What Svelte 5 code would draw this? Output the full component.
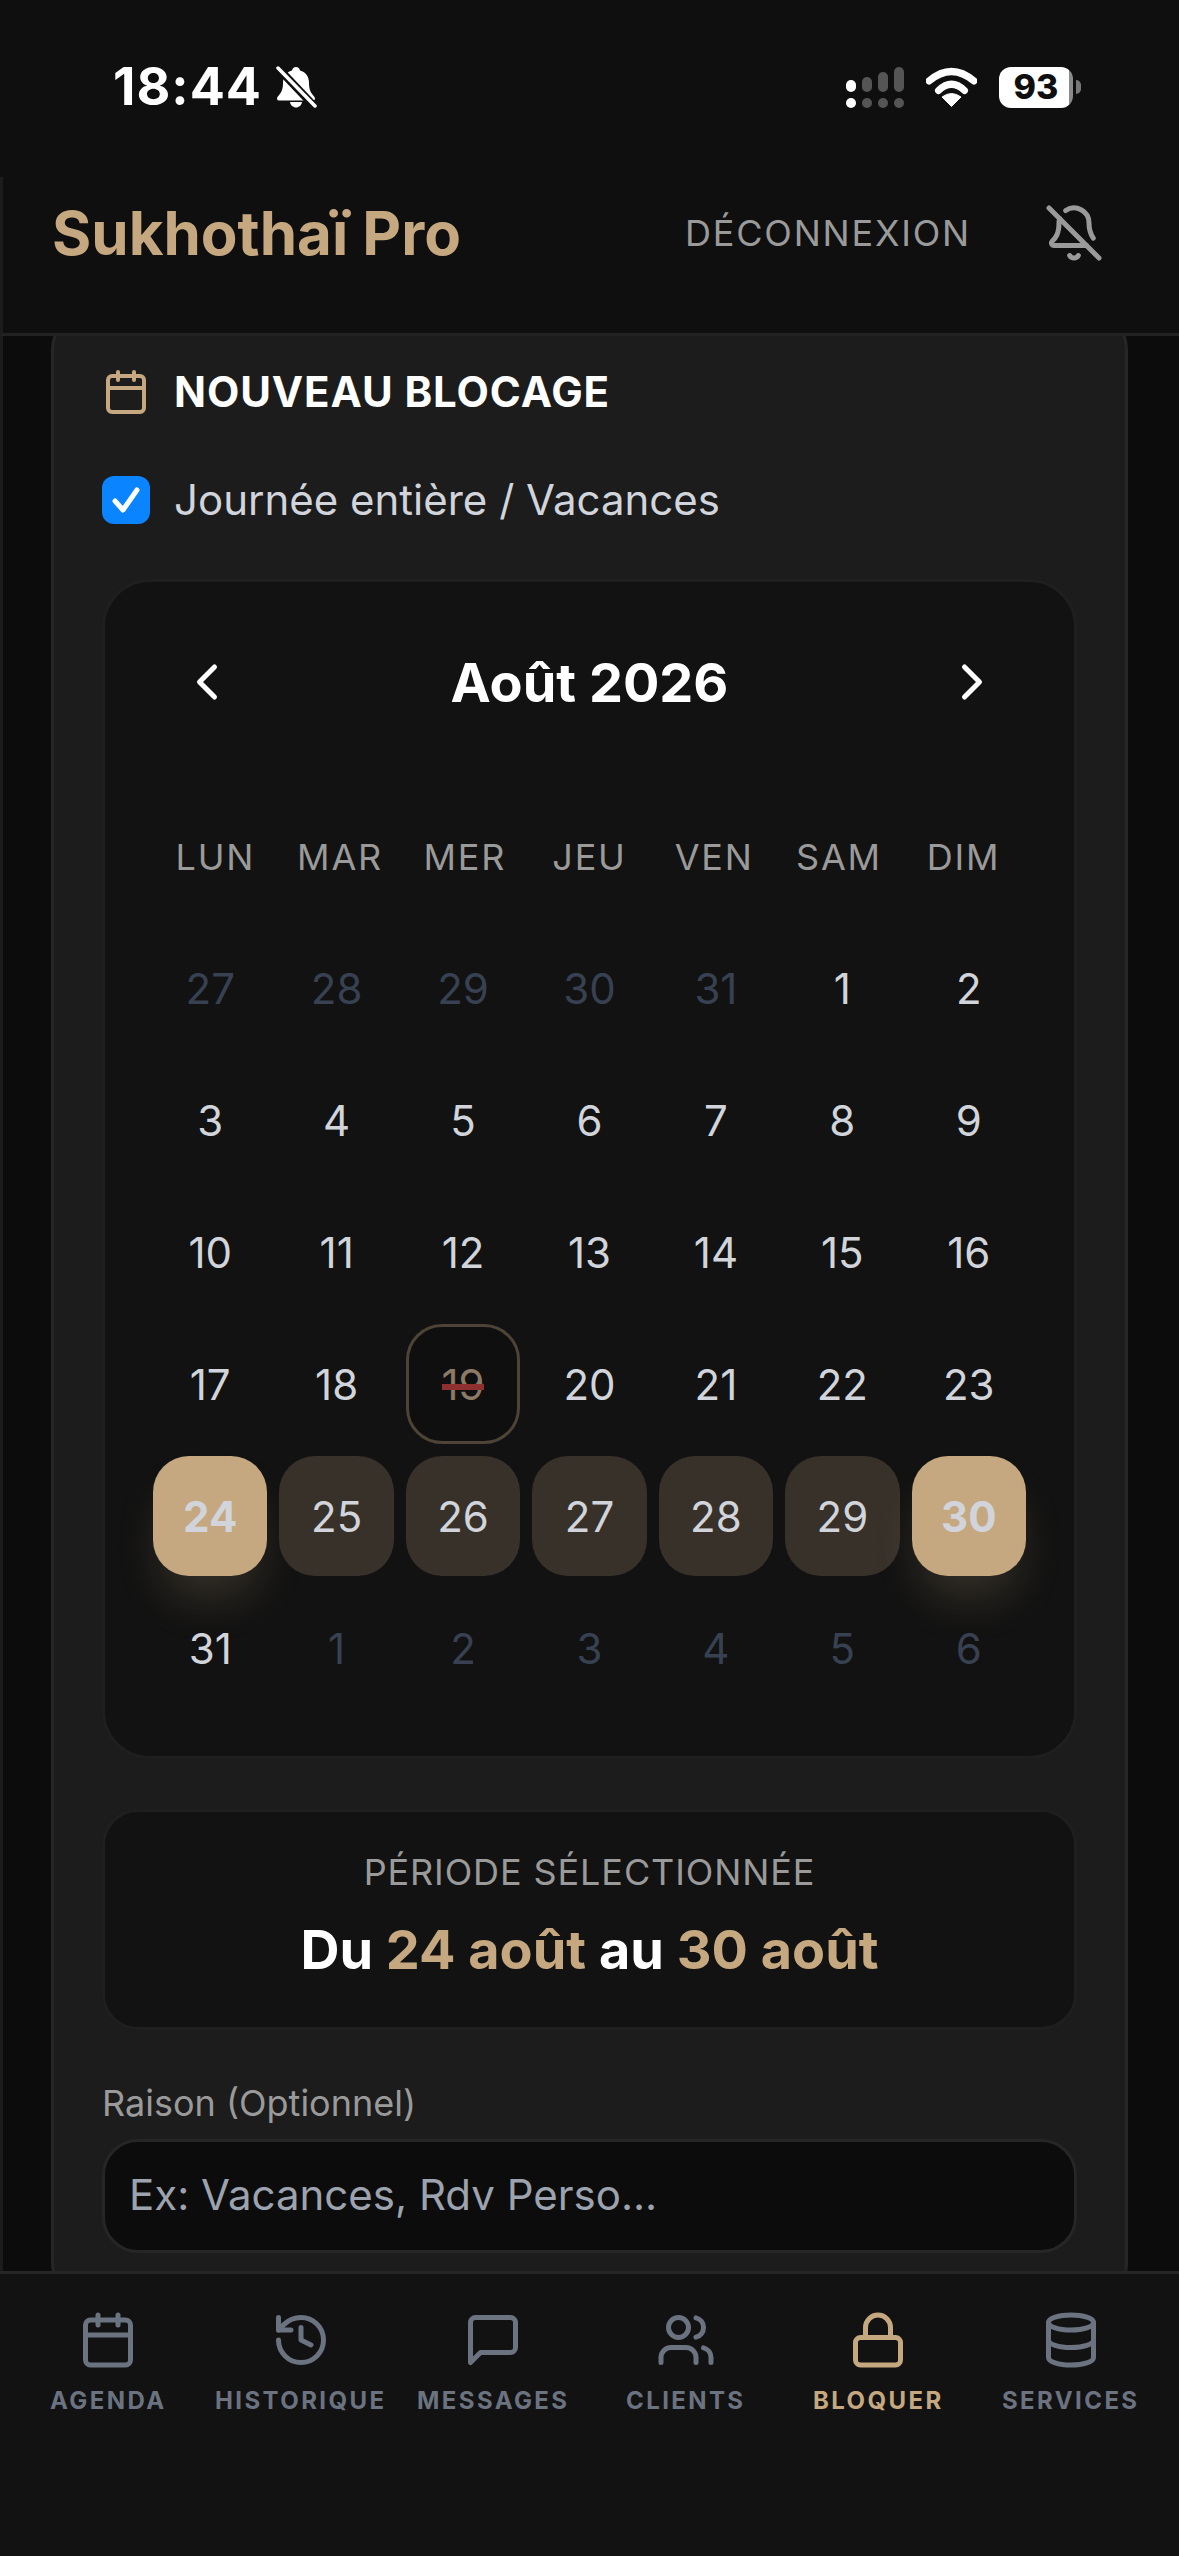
<script>
    // Calendar data for August 2026, weeks start on Monday
    const weekdays = ['LUN', 'MAR', 'MER', 'JEU', 'VEN', 'SAM', 'DIM'];

    const before = [27, 28, 29, 30, 31];
    const after = [1, 2, 3, 4, 5, 6];
    const days = [
        ...before.map((n) => ({ n, muted: true })),
        ...Array.from({ length: 31 }, (_, i) => ({ n: i + 1, muted: false })),
        ...after.map((n) => ({ n, muted: true }))
    ];

    function dayClass(day) {
        if (day.muted) return 'muted';
        if (day.n === 19) return 'today';
        if (day.n === 24 || day.n === 30) return 'edge';
        if (day.n > 24 && day.n < 30) return 'range';
        return '';
    }

    const tabs = [
        { label: 'AGENDA', icon: 'calendar' },
        { label: 'HISTORIQUE', icon: 'history' },
        { label: 'MESSAGES', icon: 'message' },
        { label: 'CLIENTS', icon: 'users' },
        { label: 'BLOQUER', icon: 'lock', active: true },
        { label: 'SERVICES', icon: 'database' }
    ];
</script>

<div class="screen">
    <div class="status">
        <div class="status-left">
            <span class="time">18:44</span>
            <svg class="silent" viewBox="0 0 42 42" width="42" height="42">
                <path d="M21 1c-2.2 0-3.6 1.500-4 3.500C11 6 8 11 8 17c0 7-2 10-5.500 14-1 1.300-.5 3.500 1.500 3.500h34c2 0 2.500-2.200 1.500-3.500C36 27 34 24 34 17c0-6-3-11-9-12.500C24.600 2.500 23.200 1 21 1z" fill="#fff" />
                <path d="M15 36h12c-.5 3.200-3 5.500-6 5.500s-5.500-2.300-6-5.500z" fill="#fff" />
                <path d="M3 2l36 38" stroke="#0f0f0f" stroke-width="8" />
                <path d="M3 2l37 38" stroke="#fff" stroke-width="3.500" stroke-linecap="round" />
            </svg>
        </div>
        <div class="status-right">
            <svg viewBox="0 0 58 41" width="58" height="41">
                <rect x="0" y="13" width="10" height="12" rx="5" fill="#fff" />
                <rect x="16" y="10" width="10" height="15" rx="5" fill="#555" />
                <rect x="32" y="5" width="10" height="20" rx="5" fill="#555" />
                <rect x="48" y="0" width="10" height="25" rx="5" fill="#555" />
                <circle cx="5" cy="36" r="5" fill="#fff" />
                <circle cx="21" cy="36" r="5" fill="#555" />
                <circle cx="37" cy="36" r="5" fill="#555" />
                <circle cx="53" cy="36" r="5" fill="#555" />
            </svg>
            <svg class="wifi" viewBox="0 0 51 40" width="51" height="40">
                <path d="M3 14Q25.500-5 48 14" fill="none" stroke="#fff" stroke-width="7" stroke-linecap="round" />
                <path d="M12.500 23.500Q25.500 11 38.500 23.500" fill="none" stroke="#fff" stroke-width="7" stroke-linecap="round" />
                <path d="M25.500 39.500L16 30Q25.500 23 35 30z" fill="#fff" stroke="#fff" stroke-width="1" stroke-linejoin="round" />
            </svg>
            <div class="battery">
                <span class="battery-level">93</span>
            </div>
            <span class="battery-cap"></span>
        </div>
    </div>

    <header class="header">
        <h1>Sukhothaï Pro</h1>
        <div class="header-actions">
            <span class="logout">DÉCONNEXION</span>
            <svg class="icon bell" viewBox="0 0 24 24" width="60" height="60">
                <path d="M10.268 21a2 2 0 0 0 3.464 0" />
                <path d="M17 17H4a1 1 0 0 1-.74-1.673C4.590 13.956 6 12.499 6 8a6 6 0 0 1 .258-1.742" />
                <path d="m2 2 20 20" />
                <path d="M8.668 3.010A6 6 0 0 1 18 8c0 2.687.77 4.653 1.707 6.050" />
            </svg>
        </div>
    </header>

    <main class="main">
        <section class="card">
            <div class="card-title">
                <svg class="icon gold" viewBox="0 0 24 24" width="48" height="48">
                    <path d="M8 2v4" /><path d="M16 2v4" />
                    <rect x="3" y="4" width="18" height="18" rx="2" />
                    <path d="M3 10h18" />
                </svg>
                <h2>NOUVEAU BLOCAGE</h2>
            </div>

            <div class="check-row">
                <span class="checkbox">
                    <svg viewBox="0 0 48 48" width="48" height="48">
                        <path d="M13 25l8 9 14-20" fill="none" stroke="#fff" stroke-width="5" stroke-linecap="round" stroke-linejoin="round" />
                    </svg>
                </span>
                <span class="check-label">Journée entière / Vacances</span>
            </div>

            <div class="calendar">
                <div class="cal-head">
                    <button class="nav-btn" aria-label="Mois précédent">
                        <svg class="icon" viewBox="0 0 24 24" width="60" height="60"><path d="m15 18-6-6 6-6" /></svg>
                    </button>
                    <h3>Août 2026</h3>
                    <button class="nav-btn" aria-label="Mois suivant">
                        <svg class="icon" viewBox="0 0 24 24" width="60" height="60"><path d="m9 18 6-6-6-6" /></svg>
                    </button>
                </div>

                <div class="weekdays">
                    {#each weekdays as w}
                        <span>{w}</span>
                    {/each}
                </div>

                <div class="days">
                    {#each days as day}
                        <div class="day {dayClass(day)}">{day.n}</div>
                    {/each}
                </div>
            </div>

            <div class="period">
                <div class="period-label">PÉRIODE SÉLECTIONNÉE</div>
                <div class="period-value">Du <em>24 août</em> au <em>30 août</em></div>
            </div>

            <label class="field-label" for="reason">Raison (Optionnel)</label>
            <input id="reason" class="field" placeholder="Ex: Vacances, Rdv Perso..." />
        </section>
    </main>

    <nav class="tabs">
        {#each tabs as tab}
            <div class="tab" class:active={tab.active}>
                <svg class="icon" viewBox="0 0 24 24" width="60" height="60">
                    {#if tab.icon === 'calendar'}
                        <path d="M8 2v4" /><path d="M16 2v4" />
                        <rect x="3" y="4" width="18" height="18" rx="2" />
                        <path d="M3 10h18" />
                    {:else if tab.icon === 'history'}
                        <path d="M3 12a9 9 0 1 0 9-9 9.750 9.750 0 0 0-6.740 2.740L3 8" />
                        <path d="M3 3v5h5" />
                        <path d="M12 7v5l4 2" />
                    {:else if tab.icon === 'message'}
                        <path d="M21 15a2 2 0 0 1-2 2H7l-4 4V5a2 2 0 0 1 2-2h14a2 2 0 0 1 2 2z" />
                    {:else if tab.icon === 'users'}
                        <path d="M16 21v-2a4 4 0 0 0-4-4H6a4 4 0 0 0-4 4v2" />
                        <circle cx="9" cy="7" r="4" />
                        <path d="M22 21v-2a4 4 0 0 0-3-3.870" />
                        <path d="M16 3.130a4 4 0 0 1 0 7.750" />
                    {:else if tab.icon === 'lock'}
                        <rect x="3" y="11" width="18" height="11" rx="2" />
                        <path d="M7 11V7a5 5 0 0 1 10 0v4" />
                    {:else}
                        <ellipse cx="12" cy="5" rx="9" ry="3" />
                        <path d="M3 5V19A9 3 0 0 0 21 19V5" />
                        <path d="M3 12A9 3 0 0 0 21 12" />
                    {/if}
                </svg>
                <span>{tab.label}</span>
            </div>
        {/each}
    </nav>
</div>

<style>
    :global(body) {
        margin: 0;
        background: #0f0f0f;
    }

    .screen {
        width: 1179px;
        height: 2556px;
        display: flex;
        flex-direction: column;
        overflow: hidden;
        font-family: Inter, "Noto Sans", sans-serif;
        background: #0f0f0f;
        color: #fff;
    }

    /* Status bar */
    .status {
        height: 177px;
        flex: none;
        box-sizing: border-box;
        padding: 66px 98px 0 113px;
        display: flex;
        justify-content: space-between;
        align-items: flex-start;
    }

    .status-left {
        display: flex;
        align-items: center;
        gap: 13px;
        height: 42px;
    }

    .time {
        font-size: 52px;
        font-weight: 700;
        line-height: 42px;
        letter-spacing: 1px;
    }

    .status-right {
        display: flex;
        align-items: center;
        gap: 22px;
        height: 42px;
    }

    .battery {
        width: 74px;
        height: 41px;
        border-radius: 12px;
        background: linear-gradient(to right, #fff 94%, #8a8a8a 94%);
        display: flex;
        align-items: center;
        justify-content: center;
    }

    .battery-level {
        font-size: 34px;
        font-weight: 800;
        color: #0f0f0f;
        line-height: 1;
    }

    .battery-cap {
        width: 5px;
        height: 14px;
        margin-left: -19px;
        background: #777;
        border-radius: 0 7px 7px 0;
    }

    /* Header */
    .header {
        height: 159px;
        flex: none;
        box-sizing: border-box;
        padding: 0 75px 45px 49px;
        display: flex;
        justify-content: space-between;
        align-items: center;
        border-left: 3px solid #1c1c1c;
        border-bottom: 3px solid #222;
        background: #0f0f0f;
    }

    h1 {
        margin: 0;
        font-size: 60px;
        font-weight: 700;
        color: #c5a880;
    }

    .header-actions {
        display: flex;
        align-items: center;
        gap: 73px;
    }

    .logout {
        font-size: 36px;
        letter-spacing: 1.800px;
        color: #9a9a9a;
    }

    .icon {
        fill: none;
        stroke: currentColor;
        stroke-width: 2;
        stroke-linecap: round;
        stroke-linejoin: round;
        display: block;
        flex: none;
    }

    .bell {
        color: #9a9a9a;
    }

    .gold {
        color: #c5a880;
    }

    /* Scrolled content, the card top sits behind the header */
    .main {
        flex: 1;
        min-height: 0;
        overflow: hidden;
        background: #0c0c0c;
        border-left: 3px solid #1c1c1c;
        padding: 0 51px 0 48px;
    }

    .card {
        margin-top: -33px;
        box-sizing: border-box;
        background: #1c1c1c;
        border: 3px solid #262626;
        border-radius: 48px;
        padding: 54px 48px;
    }

    .card-title {
        display: flex;
        align-items: center;
        gap: 24px;
        height: 63px;
    }

    h2 {
        margin: 0;
        font-size: 42px;
        font-weight: 700;
        letter-spacing: 0.900px;
    }

    .check-row {
        display: flex;
        align-items: center;
        gap: 24px;
        margin-top: 45px;
        height: 63px;
    }

    .checkbox {
        width: 48px;
        height: 48px;
        border-radius: 12px;
        background: #0a84ff;
    }

    .check-label {
        font-size: 42px;
        color: #d1d5db;
    }

    /* Calendar */
    .calendar {
        margin-top: 48px;
        background: #121212;
        border: 3px solid #1f1f1f;
        border-radius: 48px;
        padding: 46px 48px 48px;
    }

    .cal-head {
        display: flex;
        justify-content: space-between;
        align-items: center;
    }

    .nav-btn {
        padding: 24px;
        border: none;
        background: none;
        color: #fff;
    }

    h3 {
        margin: 0;
        font-size: 54px;
        font-weight: 700;
    }

    .weekdays {
        display: grid;
        grid-template-columns: repeat(7, 1fr);
        margin-top: 94px;
        margin-bottom: 44px;
        text-align: center;
        font-size: 36px;
        line-height: 54px;
        letter-spacing: 1.800px;
        color: #9a9a9a;
    }

    .days {
        display: grid;
        grid-template-columns: repeat(7, 1fr);
        grid-auto-rows: 120px;
        gap: 12px;
    }

    .day {
        position: relative;
        display: flex;
        align-items: center;
        justify-content: center;
        font-size: 42px;
        color: #d1d5db;
        border-radius: 36px;
        box-sizing: border-box;
    }

    .muted {
        color: #374151;
    }

    .range {
        background: #38312a;
    }

    .edge {
        background: #c5a880;
        font-weight: 700;
        box-shadow: 0 30px 45px -9px rgba(197, 168, 128, 0.2);
    }

    .today {
        color: #8c7a66;
        background: #0f0f0f;
        border: 3px solid #4d4337;
    }

    .today::after {
        content: '';
        position: absolute;
        left: 33px;
        right: 33px;
        top: 57px;
        height: 6px;
        background: #8f3030;
    }

    /* Period summary */
    .period {
        margin-top: 50px;
        background: #121212;
        border: 3px solid #1f1f1f;
        border-radius: 36px;
        padding: 33px 48px 37px;
        text-align: center;
    }

    .period-label {
        font-size: 36px;
        line-height: 54px;
        letter-spacing: 0.900px;
        color: #9a9a9a;
    }

    .period-value {
        margin-top: 10px;
        font-size: 54px;
        font-weight: 700;
        line-height: 81px;
    }

    .period-value em {
        font-style: normal;
        color: #c5a880;
    }

    /* Reason field */
    .field-label {
        display: block;
        margin-top: 46px;
        font-size: 36px;
        line-height: 54px;
        color: #9a9a9a;
    }

    .field {
        display: block;
        width: 100%;
        box-sizing: border-box;
        height: 114px;
        margin-top: 9px;
        padding: 0 24px 4px;
        background: #0c0c0c;
        border: 3px solid #262626;
        border-radius: 36px;
        font-family: inherit;
        font-size: 42px;
        color: #fff;
        outline: none;
    }

    .field::placeholder {
        color: #9ca3af;
        opacity: 1;
    }

    /* Bottom tabs */
    .tabs {
        height: 285px;
        flex: none;
        box-sizing: border-box;
        border-top: 3px solid #262626;
        background: #121212;
        padding: 36px 12px 0;
        display: grid;
        grid-template-columns: repeat(6, 1fr);
        align-items: start;
    }

    .tab {
        display: flex;
        flex-direction: column;
        align-items: center;
        gap: 13px;
        color: #6b7280;
        font-size: 24px;
        font-weight: 700;
        line-height: 36px;
        letter-spacing: 2.400px;
    }

    .tab.active {
        color: #c5a880;
    }
</style>
